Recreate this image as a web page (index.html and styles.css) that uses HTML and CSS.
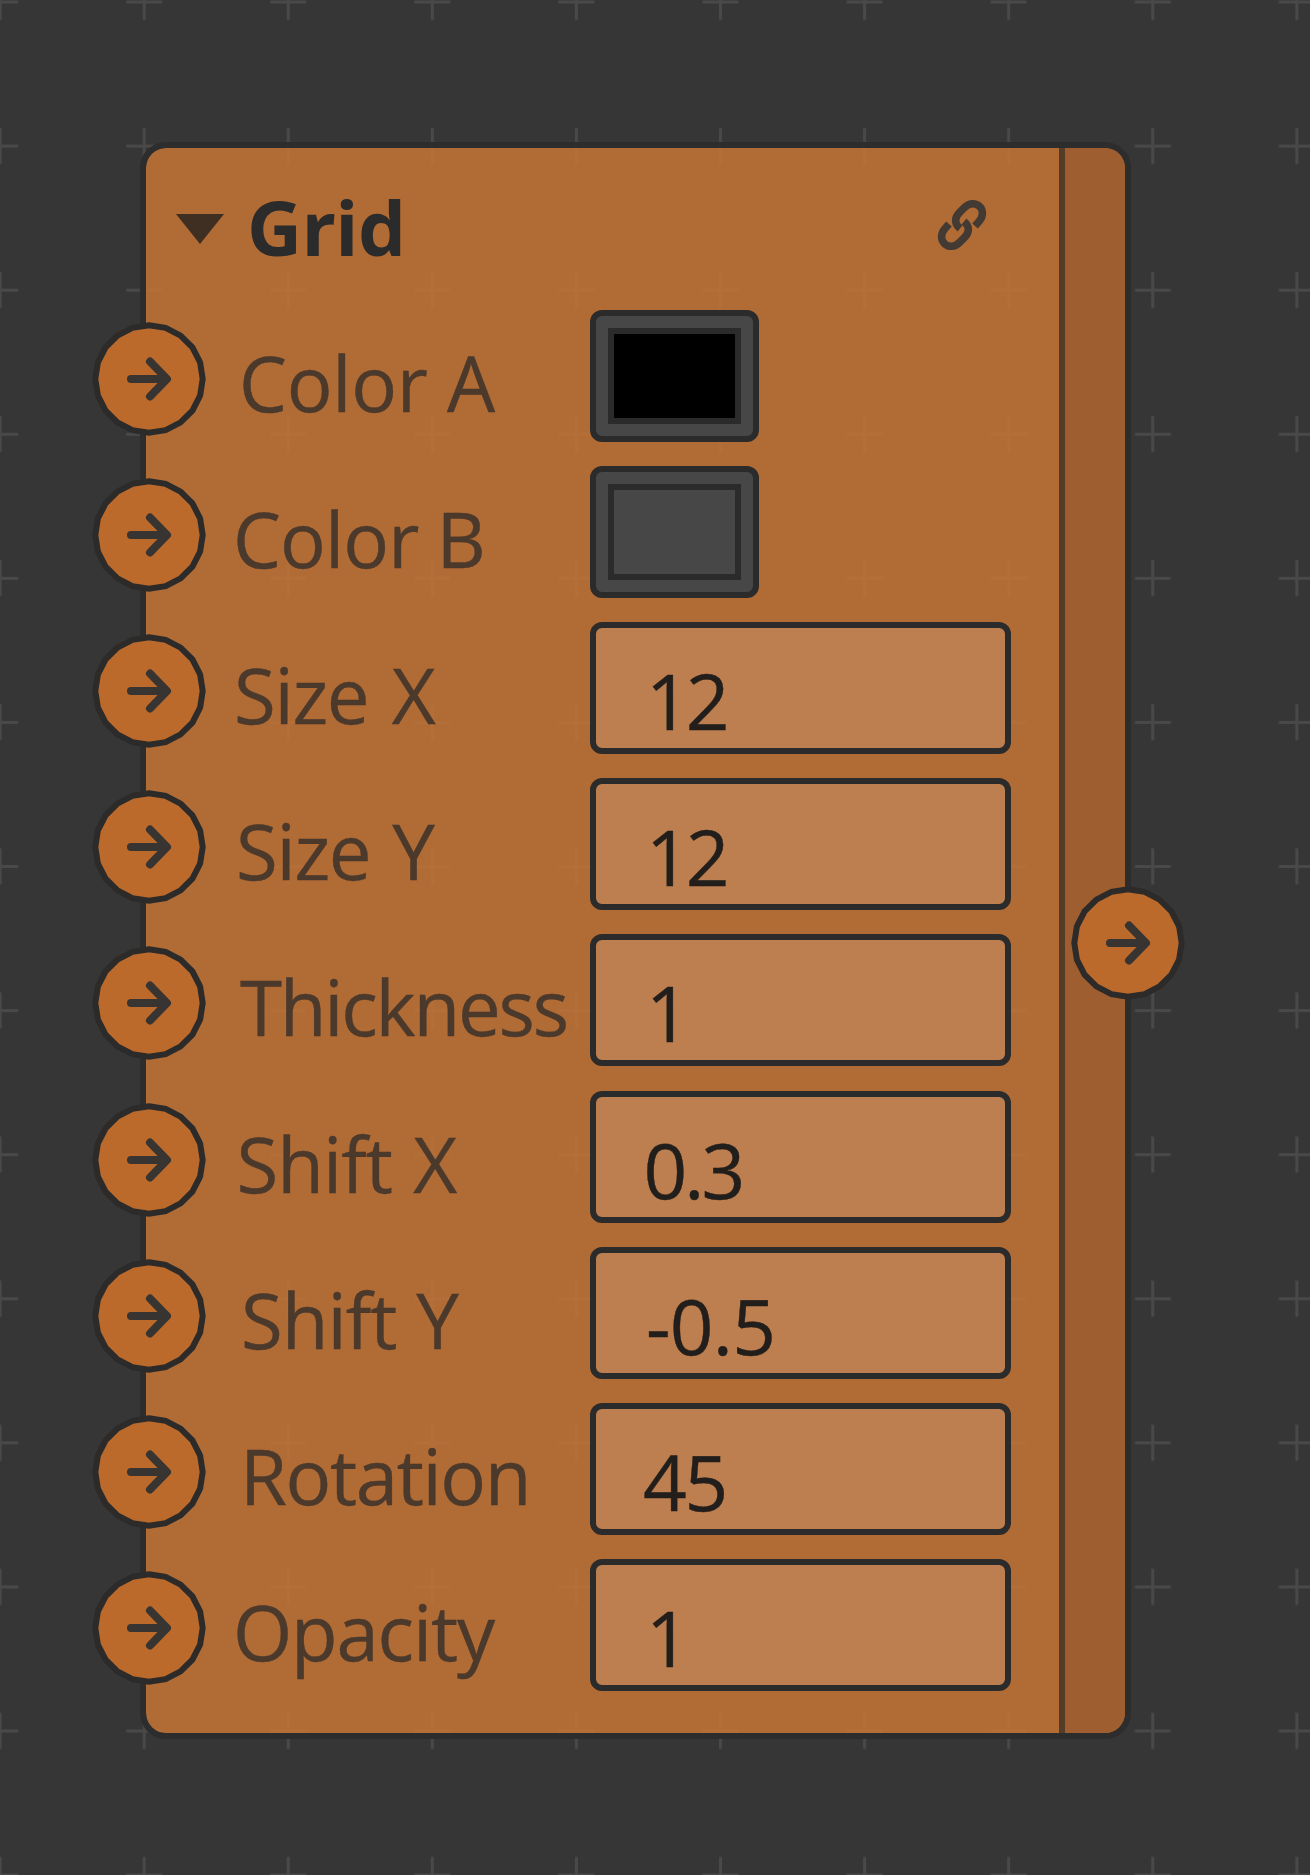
FILE: index.html
```html
<!DOCTYPE html>
<html lang="en">
<head>
<meta charset="utf-8">
<title>Grid node</title>
<link rel="stylesheet" href="styles.css">
</head>
<body>
<main class="canvas">
  <svg class="canvas-grid" width="1310" height="1875" aria-hidden="true">
    <defs>
      <pattern id="cross" x="-71.9" y="-70" width="144.08" height="144.08" patternUnits="userSpaceOnUse">
        <path d="M54 72H90M72 54V90" stroke="#494949" stroke-width="3"/>
      </pattern>
      <g id="port">
        <polygon class="port-ring" points="0,-53.7 16.6,-51.1 31.6,-43.4 43.4,-31.6 51.1,-16.6 53.7,0 51.1,16.6 43.4,31.6 31.6,43.4 16.6,51.1 0,53.7 -16.6,51.1 -31.6,43.4 -43.4,31.6 -51.1,16.6 -53.7,0 -51.1,-16.6 -43.4,-31.6 -31.6,-43.4 -16.6,-51.1"/>
        <path class="port-arrow" d="M-18 0H17M1-17.5L18 0L1 17.5"/>
      </g>
    </defs>
    <rect width="1310" height="1875" fill="url(#cross)"/>
  </svg>
  <section class="node">
    <div class="node-body">
      <header class="node-header">
        <svg class="caret" viewBox="0 0 48 30"><path d="M0 0H48L24 30Z"/></svg>
        <h1 class="title">Grid</h1>
        <svg class="link" viewBox="0 0 50 50"><path d="M38 26L42 21.5C52 10 38-3 27.5 7.5L22.5 12.5C17 18 17.500 24 23 28.5M12 24L8 28.5C-2 40 12 53 22.5 42.5L27.500 37.5C33 32 32.5 26 27 21.5"/></svg>
      </header>
      <div class="rows">
        <div class="row"><svg class="port" viewBox="-57 -57 114 114"><use href="#port"/></svg><span class="label l-color-a">Color A</span><div class="swatch black"></div></div>
        <div class="row"><svg class="port" viewBox="-57 -57 114 114"><use href="#port"/></svg><span class="label l-color-b">Color B</span><div class="swatch gray"></div></div>
        <div class="row"><svg class="port" viewBox="-57 -57 114 114"><use href="#port"/></svg><span class="label l-size-x">Size X</span><div class="field v-12">12</div></div>
        <div class="row"><svg class="port" viewBox="-57 -57 114 114"><use href="#port"/></svg><span class="label l-size-y">Size Y</span><div class="field v-12">12</div></div>
        <div class="row"><svg class="port" viewBox="-57 -57 114 114"><use href="#port"/></svg><span class="label l-thickness">Thickness</span><div class="field v-1">1</div></div>
        <div class="row"><svg class="port" viewBox="-57 -57 114 114"><use href="#port"/></svg><span class="label l-shift-x">Shift X</span><div class="field v-decimal">0.3</div></div>
        <div class="row"><svg class="port" viewBox="-57 -57 114 114"><use href="#port"/></svg><span class="label l-shift-y">Shift Y</span><div class="field v-negative">-0.5</div></div>
        <div class="row"><svg class="port" viewBox="-57 -57 114 114"><use href="#port"/></svg><span class="label l-rotation">Rotation</span><div class="field v-45">45</div></div>
        <div class="row"><svg class="port" viewBox="-57 -57 114 114"><use href="#port"/></svg><span class="label l-opacity">Opacity</span><div class="field v-1">1</div></div>
      </div>
    </div>
    <aside class="node-output"><svg class="port out" viewBox="-57 -57 114 114"><use href="#port"/></svg></aside>
  </section>
</main>
</body>
</html>
```

FILE: styles.css
```css
*, *::before { box-sizing: border-box; }
body { margin: 0; background: #363636; font-family: "Open Sans", "Noto Sans", sans-serif; }
.canvas { position: relative; width: 1310px; height: 1875px; padding: 142px 0 0 140px; overflow: hidden; }
.canvas-grid { position: absolute; left: 0; top: 0; }
.node { position: relative; display: flex; width: 991px; height: 1597px; border: 6px solid #2d2d2d; border-radius: 26px; background: rgba(198, 116, 53, .86); background-clip: padding-box; }
.node-body { width: 913px; }
.node-output { position: relative; width: 66px; border-left: 6px solid #553c29; background: #9e5e2f; border-radius: 0 20px 20px 0; }
.node-header { display: flex; height: 162px; padding-left: 30px; align-items: flex-start; }
.caret { width: 48px; height: 30px; margin-top: 66px; fill: #3f2e22; }
.title { width: 689px; margin: 25px 0 0 23px; font-size: 76px; line-height: 108px; font-weight: 700; color: #2b2b2b; letter-spacing: -.6px; white-space: nowrap; }
.link { width: 50px; height: 50px; margin: 52px 0 0 1px; fill: none; stroke: #433a34; stroke-width: 7.500; overflow: visible; }
.rows { display: flex; flex-direction: column; gap: 24.110px; }
.row { position: relative; display: flex; height: 132px; }
.port { position: absolute; left: -54px; top: 12px; width: 114px; height: 114px; }
.port.out { top: 738px; left: 5.700px; }
.port-ring { fill: #bb6a2c; stroke: #2c2b2a; stroke-width: 6; }
.port-arrow { fill: none; stroke: #373431; stroke-width: 8; stroke-linecap: round; stroke-linejoin: round; }

.label { width: 444px; padding: 21px 0 0 90px; font-size: 76.200px; line-height: 104px; color: #4b392c; -webkit-text-stroke: .4px #4b392c; white-space: nowrap; }
.l-color-a { padding-left: 93px; letter-spacing: -.3px; }
.l-color-b { padding-left: 87px; letter-spacing: -.9px; word-spacing: -1px; }
.l-size-x { padding-left: 88px; letter-spacing: -1.3px; word-spacing: 5px; }
.l-size-y { padding-left: 90px; letter-spacing: -1.3px; word-spacing: 3.500px; }
.l-thickness { padding-left: 94px; letter-spacing: -2.200px; }
.l-shift-x { padding-left: 90.500px; letter-spacing: -1px; word-spacing: 2.400px; }
.l-shift-y { padding-left: 95px; letter-spacing: -1px; word-spacing: 1px; }
.l-rotation { padding-left: 94px; letter-spacing: -1.400px; }
.l-opacity { padding-left: 87px; letter-spacing: -1.200px; }

.swatch { width: 169px; height: 132px; border: 6px solid #2b2b2b; border-radius: 12px; background: #474747; padding: 12px; }
.swatch::before { content: ""; display: block; width: 133px; height: 96px; border: 6px solid #2b2b2b; }
.swatch.black::before { background: #000; }
.swatch.gray::before { background: #474747; }

.field { width: 421px; height: 132px; border: 6px solid #2b2b2b; border-radius: 12px; background: #bd7f4f; padding: 20px 0 0 50px; font-size: 76.600px; line-height: 104px; color: #221e1b; -webkit-text-stroke: .4px #221e1b; white-space: nowrap; }
.v-12 { letter-spacing: -4px; }
.v-decimal { padding-left: 47.500px; letter-spacing: -3px; }
.v-negative { letter-spacing: -.8px; }
.v-45 { padding-left: 47px; letter-spacing: -2.400px; }
```
